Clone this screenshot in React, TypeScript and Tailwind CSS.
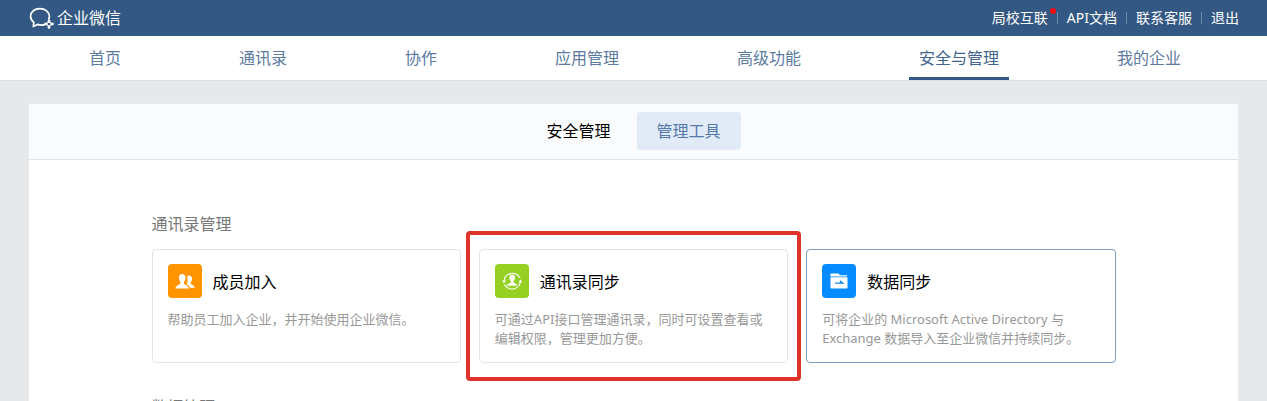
import { ReactNode } from "react";

const headerLinks = [
  { label: "局校互联", dot: true },
  { label: "API文档" },
  { label: "联系客服" },
  { label: "退出" },
];

const navItems = ["首页", "通讯录", "协作", "应用管理", "高级功能", "安全与管理", "我的企业"];

function LogoIcon() {
  return (
    <svg className="h-6 w-7" viewBox="0 0 28 24" fill="none" stroke="#fff" strokeWidth="1.7" aria-hidden="true">
      <path
        d="M16.5 18.6c-2.2.7-4.8.6-6.9-.2L5.3 20.400l.5-4C3.600 14.600 2.600 12.400 2.600 10.200 2.600 5.800 6.700 2.600 11.900 2.600s9.500 3.300 9.500 7.700c0 1-.2 1.800-.6 2.600"
        strokeLinecap="round"
        strokeLinejoin="round"
      />
      <path d="M21 15.300l2.700 2.700-2.700 2.700-2.700-2.700z" strokeWidth="1.200" />
      <g fill="#fff" stroke="none">
        <circle cx="21" cy="14.800" r="1.400" />
        <circle cx="24.400" cy="18" r="1.400" />
        <circle cx="21" cy="21.400" r="1.400" />
        <circle cx="17.600" cy="18" r="1.400" />
      </g>
    </svg>
  );
}

function MembersIcon() {
  return (
    <svg className="h-full w-full" viewBox="0 0 34 34" fill="#fff" aria-hidden="true">
      <path d="M20.9 11.500c2 0 3.200 1.300 3.200 3.300 0 1.500-.6 2.700-1.400 3.400v1.400c.4 1.100 3.800 1.800 4.200 4.200h-5c-.5-2.100-2.100-3-3.400-3.600.6-.5.9-1 .9-1.700v-6.400c.4-.4.900-.6 1.500-.6z" />
      <path d="M14.200 10c2.100 0 3.300 1.400 3.300 3.600 0 1.900-.6 3.400-1.500 4.300v1.700c.5 1.300 4.300 1.900 4.900 4.900H7.300c.6-3.200 4.600-3.600 5.100-4.900v-1.700c-.9-.9-1.500-2.400-1.500-4.300 0-2.200 1.200-3.600 3.300-3.600z" />
    </svg>
  );
}

function ContactSyncIcon() {
  return (
    <svg className="h-full w-full" viewBox="0 0 34 34" fill="#fff" aria-hidden="true">
      <path
        d="M9 17.500A8.400 8.400 0 0 1 24.800 13.800M25.400 16.500A8.400 8.400 0 0 1 9.600 20.600"
        fill="none"
        stroke="#fff"
        strokeWidth="1.200"
      />
      <path d="M7.200 16.400h3.600l-1.800 3zM23.600 18.200h3.600l-1.800-3z" />
      <path d="M17.200 10.800c1.800 0 2.900 1.200 2.900 3 0 1.400-.6 2.500-1.500 3.200v1.500c.4.900 3.200.9 3.700 3.200H12.100c.5-2.300 3.300-2.300 3.700-3.200V17c-.9-.7-1.500-1.800-1.500-3.200 0-1.800 1.100-3 2.900-3z" />
    </svg>
  );
}

function DataSyncIcon() {
  return (
    <svg className="h-full w-full" viewBox="0 0 34 34" aria-hidden="true">
      <path d="M8.500 9.500h8l1.500 1.700h7v1.200H8.500z" fill="#fff" />
      <path d="M8.500 13.300h17v10.400a.8.8 0 0 1-.8.8H9.300a.8.8 0 0 1-.8-.8z" fill="#fff" />
      <path d="M13 19.200h8l-2.500-2v2" fill="none" stroke="#148ce0" strokeWidth="1.200" />
    </svg>
  );
}

interface ToolCardProps {
  title: string;
  desc: string;
  icon: ReactNode;
  iconClass: string;
  borderClass?: string;
  highlighted?: boolean;
}

const contactTools: ToolCardProps[] = [
  {
    title: "成员加入",
    desc: "帮助员工加入企业，并开始使用企业微信。",
    icon: <MembersIcon />,
    iconClass: "bg-[#ff9400]",
  },
  {
    title: "通讯录同步",
    desc: "可通过API接口管理通讯录，同时可设置查看或编辑权限，管理更加方便。",
    icon: <ContactSyncIcon />,
    iconClass: "bg-[#96d023]",
    highlighted: true,
  },
  {
    title: "数据同步",
    desc: "可将企业的 Microsoft Active Directory 与 Exchange 数据导入至企业微信并持续同步。",
    icon: <DataSyncIcon />,
    iconClass: "bg-[#068cff]",
    borderClass: "border-[#7c9dc0]",
  },
];

function ToolCard({ title, desc, icon, iconClass, borderClass = "border-[#e3e4e6]", highlighted }: ToolCardProps) {
  return (
    <a href="#" className={`relative block rounded border bg-white px-[15px] py-3.5 ${borderClass}`}>
      <div className="flex items-center gap-[11px]">
        <div className={`h-[34px] w-[34px] shrink-0 overflow-hidden rounded ${iconClass}`}>{icon}</div>
        <h3 className="pt-0.5 text-base text-black">{title}</h3>
      </div>
      <p className="mt-3 min-h-[38px] text-[13px] leading-[19px] text-[#989898]">{desc}</p>
      {highlighted && (
        <span className="pointer-events-none absolute -inset-x-3.5 -inset-y-[19px] rounded-sm border-4 border-[#e0332c]" />
      )}
    </a>
  );
}

export default function App() {
  return (
    <div className="h-screen overflow-hidden bg-[#e7e8ea] font-['Noto_Sans','Noto_Sans_CJK_SC',sans-serif]">
      {/* Top bar */}
      <header className="flex h-9 items-center justify-between bg-[#335883] px-7 text-white">
        <a href="#" className="flex items-center gap-px text-base">
          <LogoIcon />
          企业微信
        </a>
        <div className="flex items-center text-sm">
          {headerLinks.map(({ label, dot }, i) => (
            <div key={label} className="flex items-center">
              {i > 0 && <span className="mx-[9px] h-3 w-px bg-[#7089a8]" />}
              <a href="#" className="relative">
                {label}
                {dot && <span className="absolute -right-2 top-0 h-1.5 w-1.5 rounded-full bg-[#f20d0d]" />}
              </a>
            </div>
          ))}
        </div>
      </header>

      {/* Main nav */}
      <nav className="flex h-[45px] justify-between border-b border-[#dcdee1] bg-white pr-[76px] pl-[79px]">
        {navItems.map((label) => {
          const active = label === "安全与管理";
          return (
            <a
              key={label}
              href="#"
              className={`flex items-center border-y-[3px] border-t-transparent px-2.5 text-base ${
                active ? "border-b-[#335883] text-[#41648f]" : "border-b-transparent text-[#5d7b9f]"
              }`}
            >
              {label}
            </a>
          );
        })}
      </nav>

      <main className="mx-7 mt-[22px] min-h-screen rounded-t border-x border-t border-[#e9ebee] bg-white">
        {/* Tabs */}
        <div className="flex h-14 items-center justify-center gap-1.5 rounded-t border-b border-[#e1e3e6] bg-[#f9fbfd] pb-0.5">
          <button className="h-[38px] rounded px-5 text-base text-black">安全管理</button>
          <button className="h-[38px] rounded bg-[#e0ebf7] px-5 text-base text-[#5478a8]">管理工具</button>
        </div>

        <div className="mx-auto max-w-[964px]">
          <section className="pt-[52px]">
            <h2 className="text-base text-[#787878]">通讯录管理</h2>
            <div className="mt-[13px] grid grid-cols-3 gap-[18px]">
              {contactTools.map((tool) => (
                <ToolCard key={tool.title} {...tool} />
              ))}
            </div>
          </section>
          <section className="pt-8">
            <h2 className="text-base text-[#787878]">数据管理</h2>
          </section>
        </div>
      </main>
    </div>
  );
}
